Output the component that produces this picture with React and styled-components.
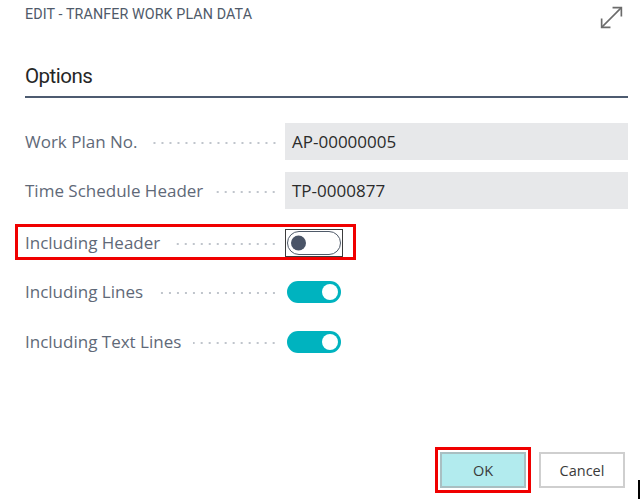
import React from "react";
import styled, { createGlobalStyle } from "styled-components";

const Global = createGlobalStyle`
  html, body { margin: 0; padding: 0; background: #fff; }
  body { font-family: "Open Sans", "Noto Sans", sans-serif; }
`;

const Page = styled.div`
  position: relative;
  width: 644px;
  height: 499px;
  box-sizing: border-box;
  padding: 0 16px 0 25px;
  display: flex;
  flex-direction: column;
  overflow: hidden;
`;

const Header = styled.div`
  display: flex;
  justify-content: space-between;
  align-items: flex-start;
  height: 46px;
`;

const Title = styled.h1`
  margin: 6px 0 0;
  font-family: "Roboto", "Noto Sans", sans-serif;
  font-weight: 400;
  font-size: 14.3px;
  letter-spacing: 0.1px;
  color: #4f5a69;
  text-transform: uppercase;
`;

const ExpandButton = styled.div`
  width: 27px;
  height: 27px;
  margin: 4px 3px 0 0;
  color: #6b6b6b;
`;

const SectionTitle = styled.h2`
  margin: 16px 0 0;
  padding-bottom: 6px;
  font-family: "Roboto", "Noto Sans", sans-serif;
  font-size: 20.5px;
  letter-spacing: -0.5px;
  font-weight: 400;
  color: #262626;
  border-bottom: 2px solid #4d5b70;
  line-height: 28px;
`;

const Fields = styled.div`
  display: flex;
  flex-direction: column;
  gap: 12px;
  margin-top: 24px;
`;

const Row = styled.div`
  position: relative;
  display: grid;
  grid-template-columns: 260px 1fr;
  align-items: center;
  height: 37px;
  margin-top: ${(p) => p.$mt || 0}px;
`;

const Highlight = styled.div`
  position: absolute;
  left: -10px;
  top: 0;
  width: 335px;
  height: 30px;
  border: 3px solid #f00000;
  pointer-events: none;
`;

const Label = styled.div`
  display: flex;
  align-items: center;
  padding-right: 7px;
  font-size: 17px;
  color: #5f6978;
  white-space: nowrap;
`;

const Leader = styled.span`
  flex: 1;
  height: 2px;
  margin: 3px 0 0 12px;
  background-image: radial-gradient(circle, #c0c5cc 0.9px, transparent 1.2px);
  background-size: 8px 2px;
  background-position: right center;
`;

const Value = styled.div`
  height: 37px;
  display: flex;
  align-items: center;
  padding-left: 7px;
  background: #e7e8ea;
  font-size: 17px;
  color: #2b2b2b;
`;

const ToggleWrap = styled.div`
  padding-left: 2px;
  display: flex;
  align-items: center;
`;

const Focus = styled.div`
  padding: 1px;
  border: 1px solid #3c3c3c;
  margin-left: -2px;
  display: flex;
`;

const Switch = styled.div`
  position: relative;
  box-sizing: border-box;
  width: 54px;
  height: ${(p) => (p.$on ? 22 : 24)}px;
  border-radius: 12px;
  background: ${(p) => (p.$on ? "#00b3bf" : "#ffffff")};
  border: ${(p) => (p.$on ? "none" : "1.5px solid #4f5a69")};
`;

const Knob = styled.span`
  position: absolute;
  top: 50%;
  transform: translateY(-50%);
  width: ${(p) => (p.$on ? 16 : 15)}px;
  height: ${(p) => (p.$on ? 16 : 15)}px;
  border-radius: 50%;
  background: ${(p) => (p.$on ? "#ffffff" : "#4a5467")};
  ${(p) => (p.$on ? "right: 3px;" : "left: 3px;")}
`;

const Footer = styled.div`
  margin-top: auto;
  display: flex;
  justify-content: flex-end;
  gap: 13px;
  padding: 0 3px 11px 0;
`;

const Button = styled.button`
  width: 86px;
  height: 36px;
  box-sizing: border-box;
  font-family: "Open Sans", "Noto Sans", sans-serif;
  font-size: 14.5px;
  color: #3a3a3a;
  background: ${(p) => (p.$primary ? "#b2ebee" : "#ffffff")};
  border: 2px solid ${(p) => (p.$primary ? "#a9bfc2" : "#cfcfcf")};
  ${(p) => (p.$primary ? "outline: 3px solid #f00000; outline-offset: 2px;" : "")}
  cursor: pointer;
`;

const Cursor = styled.div`
  position: absolute;
  left: 638px;
  top: 480px;
  width: 1.5px;
  height: 19px;
  background: #000;
`;

function Toggle({ on, focused }) {
  const sw = (
    <Switch $on={on}>
      <Knob $on={on} />
    </Switch>
  );
  return <ToggleWrap>{focused ? <Focus>{sw}</Focus> : sw}</ToggleWrap>;
}

export default function App() {
  return (
    <>
      <Global />
      <Page>
        <Header>
          <Title>Edit - Tranfer Work Plan Data</Title>
          <ExpandButton>
            <svg width="27" height="27" viewBox="0 0 26 26" fill="none" stroke="currentColor" strokeWidth="1.6">
              <path d="M3.5 22.5 L22.5 3.5" />
              <path d="M14 3.5 H22.5 V12" />
              <path d="M3.5 14 V22.5 H12" />
            </svg>
          </ExpandButton>
        </Header>
        <SectionTitle>Options</SectionTitle>
        <Fields>
          <Row $mt={1}>
            <Label>Work Plan No.<Leader /></Label>
            <Value>AP-00000005</Value>
          </Row>
          <Row>
            <Label>Time Schedule Header<Leader /></Label>
            <Value>TP-0000877</Value>
          </Row>
          <Row $mt={3}>
            <Highlight />
            <Label>Including Header<Leader /></Label>
            <Toggle on={false} focused />
          </Row>
          <Row>
            <Label>Including Lines<Leader /></Label>
            <Toggle on />
          </Row>
          <Row $mt={1}>
            <Label>Including Text Lines<Leader /></Label>
            <Toggle on />
          </Row>
        </Fields>
        <Footer>
          <Button $primary>OK</Button>
          <Button>Cancel</Button>
        </Footer>
        <Cursor />
      </Page>
    </>
  );
}
